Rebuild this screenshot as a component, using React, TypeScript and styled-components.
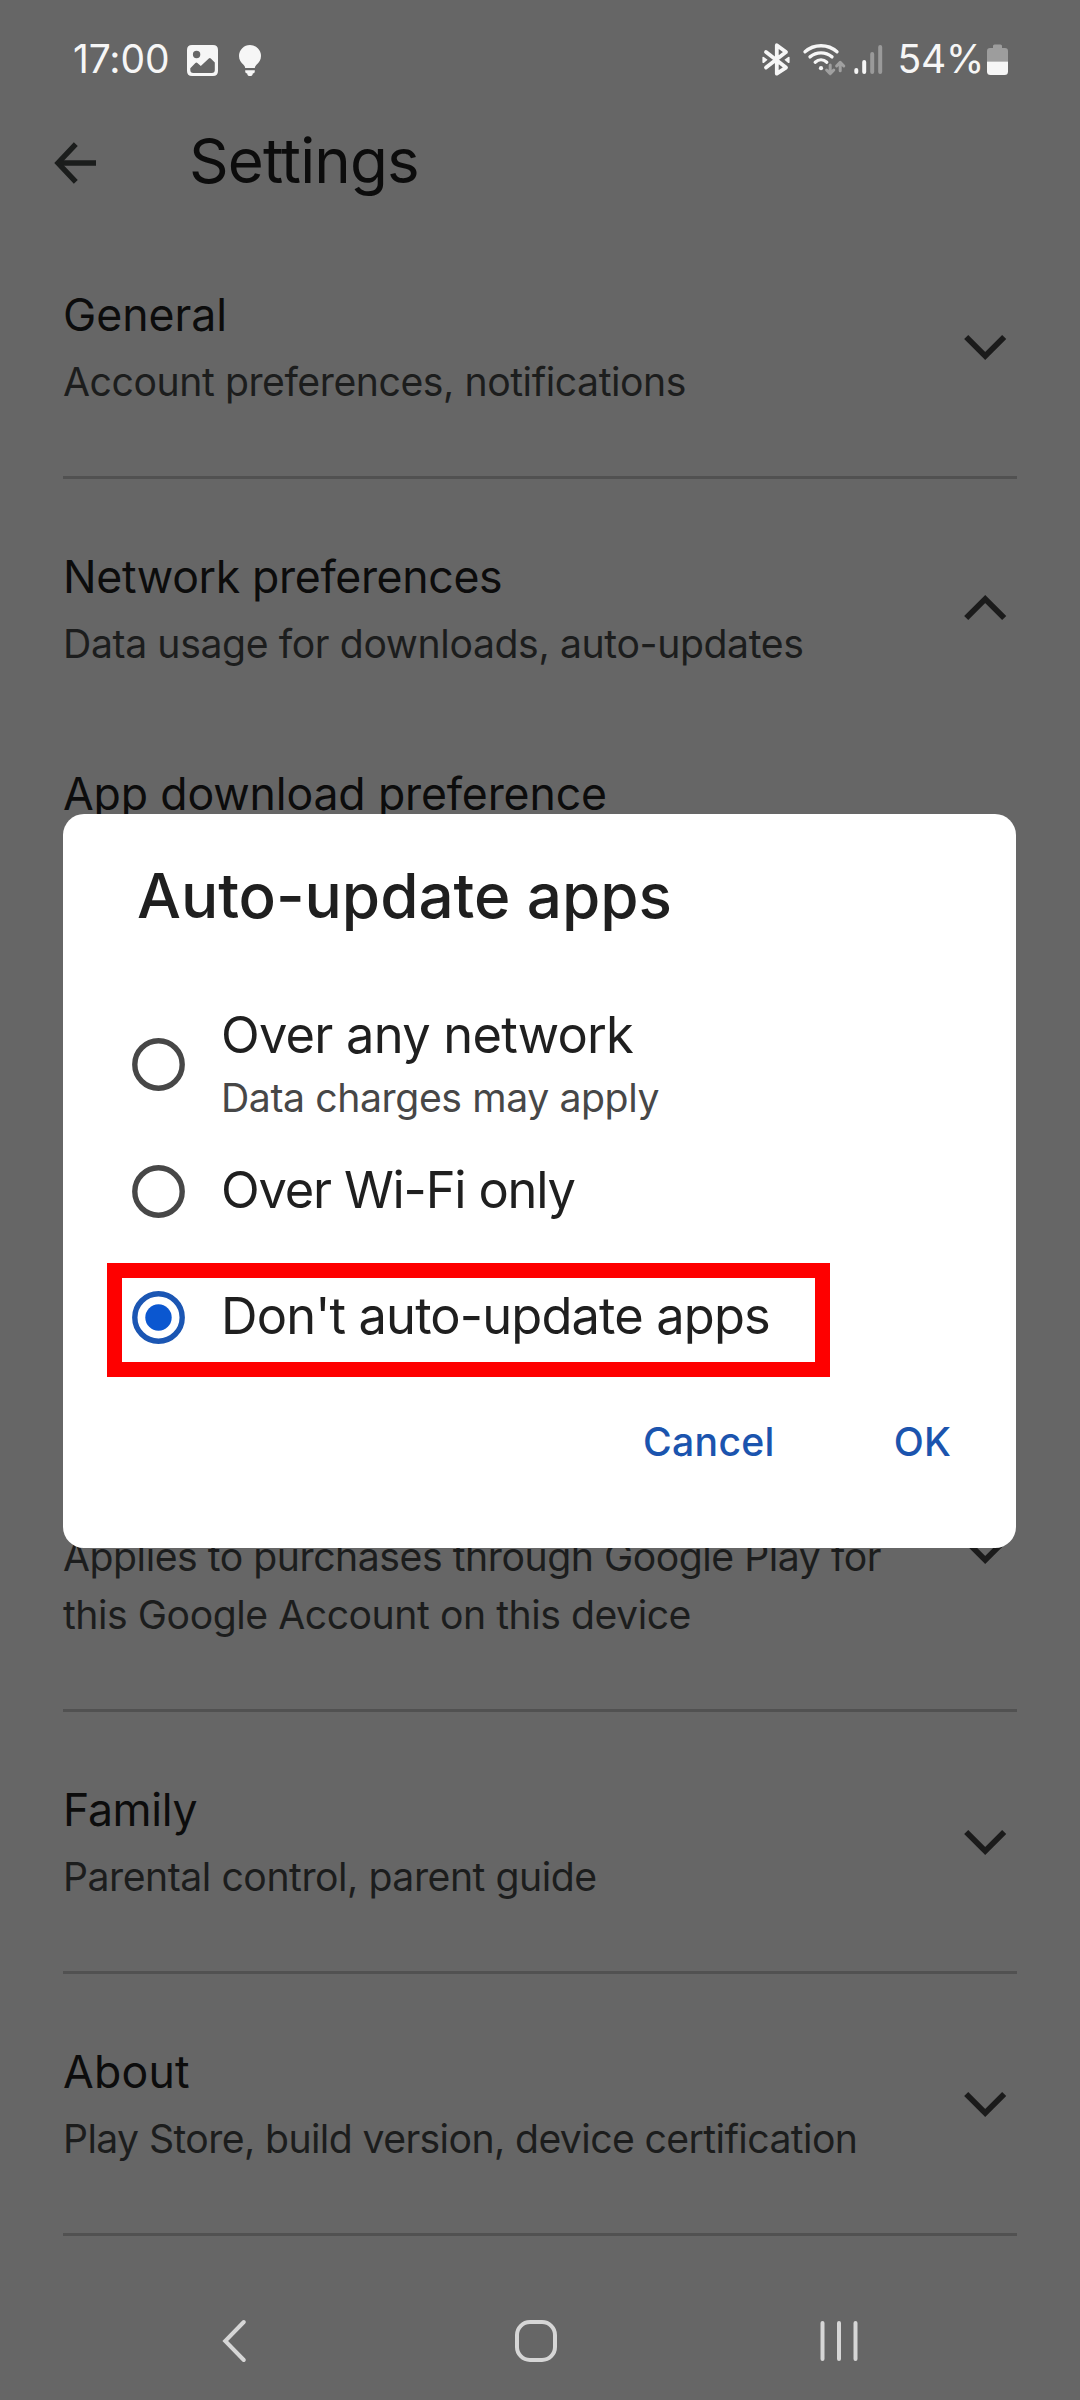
import React, { useState } from "react";
import styled, { createGlobalStyle } from "styled-components";

const Global = createGlobalStyle`
  body {
    margin: 0;
    background: #666666;
    font-family: Inter, "Liberation Sans", sans-serif;
  }
`;

const Screen = styled.div`
  position: relative;
  display: flex;
  flex-direction: column;
  width: 1080px;
  height: 2400px;
  overflow: hidden;
  background: #666666;
`;

const StatusBar = styled.header`
  display: flex;
  align-items: center;
  justify-content: space-between;
  height: 46px;
  padding: 36px 72px 0 73px;
  color: #f6f6f6;
`;

const StatusGroup = styled.div`
  display: flex;
  align-items: center;
`;

const StatusText = styled.span<{ $spacing: number; $before?: number }>`
  margin-left: ${(p) => p.$before ?? 0}px;
  font-size: 39px;
  line-height: 46px;
  letter-spacing: ${(p) => p.$spacing}px;
  white-space: nowrap;
`;

const StatusIcon = styled.svg<{ $before: number }>`
  display: block;
  flex: none;
  margin-top: 2px;
  margin-left: ${(p) => p.$before}px;
  overflow: visible;
`;

const AppBar = styled.div`
  display: flex;
  align-items: center;
  gap: 93px;
  height: 72px;
  margin-top: 43px;
  padding-left: 54px;
`;

const BackButton = styled.button`
  display: block;
  padding: 3px 0 0;
  border: 0;
  background: none;
  line-height: 0;
`;

const PageTitle = styled.h1`
  margin: 0;
  color: #0c0c0c;
  font-size: 61.8px;
  font-weight: 400;
  line-height: 72px;
  letter-spacing: -0.85px;
`;

const List = styled.main`
  display: flex;
  flex-direction: column;
  margin: 20px 63px 0;
`;

const SectionBox = styled.section<{ $divided: boolean }>`
  display: flex;
  align-items: center;
  justify-content: space-between;
  padding: 72px 11px ${(p) => (p.$divided ? 65 : 0)}px 0;
  border-bottom: ${(p) => (p.$divided ? "3px solid #515151" : "0")};
`;

const SectionText = styled.div`
  display: flex;
  flex-direction: column;
  gap: 12px;
  width: 850px;
`;

const RowTitle = styled.h2<{ $spacing: number }>`
  height: 52px;
  margin: 0;
  color: #0c0c0c;
  font-size: 44.6px;
  font-weight: 400;
  line-height: 52px;
  letter-spacing: ${(p) => p.$spacing}px;
  white-space: nowrap;
`;

const RowSummary = styled.p<{ $spacing: number }>`
  margin: 0;
  color: #1c1d1d;
  font-size: 39.2px;
  line-height: 58px;
  letter-spacing: ${(p) => p.$spacing}px;
`;

const SubRow = styled.div`
  height: 52px;
  padding: 95px 0 572px;
`;

const ChevronSvg = styled.svg`
  display: block;
  flex: none;
  overflow: visible;
`;

const NavBar = styled.nav`
  display: flex;
  align-items: flex-start;
  justify-content: space-between;
  width: 637px;
  padding: 84px 0 0 222px;
`;

const NavIcon = styled.svg`
  display: block;
  overflow: visible;
  fill: none;
  stroke: #d6d6d6;
  stroke-width: 4;
`;

const Dialog = styled.div`
  position: absolute;
  top: 814px;
  left: 63px;
  display: flex;
  flex-direction: column;
  box-sizing: border-box;
  width: 953px;
  height: 734px;
  padding: 45px 65px 0 69px;
  border-radius: 21px;
  background: #ffffff;
`;

const DialogTitle = styled.h2`
  margin: 0 0 67px 5px;
  color: #1f1f1f;
  font-size: 62px;
  font-weight: 500;
  line-height: 74px;
  letter-spacing: -0.05px;
  white-space: nowrap;
`;

const Option = styled.label<{ $height: number }>`
  display: flex;
  align-items: center;
  gap: 36px;
  height: ${(p) => p.$height}px;
`;

const OptionText = styled.div`
  display: flex;
  flex-direction: column;
  gap: 9px;
  padding-bottom: 3px;
`;

const OptionLabel = styled.span<{ $spacing: number }>`
  color: #1f1f1f;
  font-size: 50.6px;
  line-height: 60px;
  letter-spacing: ${(p) => p.$spacing}px;
  white-space: nowrap;
`;

const OptionHint = styled.span`
  color: #474747;
  font-size: 39.2px;
  line-height: 48px;
  letter-spacing: -0.41px;
  white-space: nowrap;
`;

const RadioSvg = styled.svg`
  display: block;
  flex: none;
`;

const Highlight = styled.div`
  position: absolute;
  top: 449px;
  left: 44px;
  box-sizing: border-box;
  width: 723px;
  height: 114px;
  border: 15px solid #fe0000;
  pointer-events: none;
`;

const Actions = styled.div`
  display: flex;
  justify-content: flex-end;
  gap: 119px;
  margin-top: 37px;
`;

const ActionButton = styled.button<{ $spacing: number }>`
  padding: 0;
  border: 0;
  background: none;
  color: #1b54ae;
  font-family: inherit;
  font-size: 39.2px;
  font-weight: 500;
  line-height: 48px;
  letter-spacing: ${(p) => p.$spacing}px;
`;

function Chevron({ up }: { up?: boolean }) {
  return (
    <ChevronSvg width="42" height="31" viewBox="0 0 42 31">
      <path
        d={up ? "M2.2 21L21.2 2L40.2 21" : "M2.2 2L21.2 21L40.2 2"}
        fill="none"
        stroke="#1b1b1b"
        strokeWidth="5.8"
      />
    </ChevronSvg>
  );
}

function Radio({ on }: { on: boolean }) {
  return (
    <RadioSvg width="53" height="53" viewBox="0 0 53 53">
      <circle cx="26.5" cy="26.5" r="23.7" fill="none" stroke={on ? "#1b56b3" : "#474747"} strokeWidth="5.4" />
      {on && <circle cx="26.5" cy="26.5" r="13.2" fill="#0b57d0" />}
    </RadioSvg>
  );
}

interface SectionProps {
  title?: string;
  titleSpacing?: number;
  summary: string;
  spacing: number;
  expanded?: boolean;
}

function Section({ title, titleSpacing = 0, summary, spacing, expanded }: SectionProps) {
  return (
    <SectionBox $divided={!expanded}>
      <SectionText>
        <RowTitle $spacing={titleSpacing}>{title}</RowTitle>
        <RowSummary $spacing={spacing}>{summary}</RowSummary>
      </SectionText>
      <Chevron up={expanded} />
    </SectionBox>
  );
}

const options = [
  { label: "Over any network", hint: "Data charges may apply", spacing: -0.76, height: 129 },
  { label: "Over Wi-Fi only", spacing: -1.2, height: 125 },
  { label: "Don't auto-update apps", spacing: -0.86, height: 127 },
];

export default function App() {
  const [selected, setSelected] = useState(2);

  return (
    <Screen>
      <Global />
      <StatusBar>
        <StatusGroup>
          <StatusText $spacing={-0.13}>17:00</StatusText>
          <StatusIcon $before={18} width="31" height="32" viewBox="0 -1 31 32">
            <path
              fill="currentColor"
              fillRule="evenodd"
              d="M5 0H26Q31 0 31 5V26Q31 31 26 31H5Q0 31 0 26V5Q0 0 5 0ZM9.6 5.8A3.7 3.7 0 1 0 9.6 13.2A3.7 3.7 0 1 0 9.6 5.8ZM3.3 23.2L8.4 17.9Q9.4 17 10.4 17.9L13.8 21L21.8 13.4Q22.8 12.5 23.8 13.4L27.8 17.4V25Q27.8 28 24.8 28H6.3Q3.3 28 3.3 25Z"
            />
          </StatusIcon>
          <StatusIcon $before={20.5} width="22" height="32" viewBox="0 -1 22 32">
            <path
              fill="currentColor"
              d="M11 0A11 11 0 0 1 22 11C22 15 20 17.5 17.5 19.7Q16 21 15.8 23H6.2Q6 21 4.5 19.7C2 17.5 0 15 0 11A11 11 0 0 1 11 0ZM6.2 25.3H15.8V26.5Q15.8 28.4 13.8 28.4Q13.6 31 11 31Q8.4 31 8.2 28.4Q6.2 28.4 6.2 26.5Z"
            />
          </StatusIcon>
        </StatusGroup>
        <StatusGroup>
          <StatusIcon $before={0} width="28" height="32" viewBox="0 0 28 32">
            <path
              d="M4 8L24 23.6L14.8 29.6V1.2L24 8L4 23.6"
              fill="none"
              stroke="currentColor"
              strokeWidth="3.8"
              strokeLinejoin="round"
              strokeLinecap="round"
            />
            <path
              d="M0.4 13.2Q0.6 12.3 1.8 12.9L5.6 15.8L1.8 18.9Q0.6 19.4 0.4 18.6ZM27.6 13.2Q27.4 12.3 26.2 12.9L22.4 15.8L26.2 18.9Q27.4 19.4 27.6 18.6Z"
              fill="currentColor"
            />
          </StatusIcon>
          <StatusIcon $before={13.5} width="42" height="32" viewBox="0 0 42 32">
            <g fill="none" stroke="currentColor" strokeWidth="3.3" strokeLinecap="round">
              <path d="M2 7.8C11 -0.3 25 -0.3 34 7.8" />
              <path d="M7 12.9C13.5 7.6 22.5 7.6 29 12.9" />
              <path d="M12.2 18.2C15.6 15.2 20.4 15.2 23.8 18.2" />
            </g>
            <circle cx="18" cy="24.2" r="2.1" fill="currentColor" />
            <g fill="none" stroke="#a0a0a0" strokeWidth="3" strokeLinecap="round" strokeLinejoin="round">
              <path d="M27.2 21V29.4M23.6 26L27.2 29.6L30.8 26" />
              <path d="M37.2 26.8V18.4M33.6 22L37.2 18.4L40.8 22" />
            </g>
          </StatusIcon>
          <StatusIcon $before={9} width="28" height="32" viewBox="0 0 28 32">
            <g stroke="currentColor" strokeWidth="4" strokeLinecap="round">
              <path d="M2.3 26V28" />
              <path d="M10.2 18V28" />
            </g>
            <g stroke="#9a9a9a" strokeWidth="4" strokeLinecap="round">
              <path d="M18.2 10V28" />
              <path d="M26.2 3V28" />
            </g>
          </StatusIcon>
          <StatusText $spacing={-0.22} $before={15}>54%</StatusText>
          <StatusIcon $before={3} width="21" height="32" viewBox="0 0 21 32">
            <path
              d="M6 2Q6 0.5 7.5 0.5H13.5Q15 0.5 15 2V4H18Q21 4 21 7V17.5H0V7Q0 4 3 4H6Z"
              fill="#9d9d9d"
            />
            <path d="M0 17.5H21V27.5Q21 31 17.5 31H3.5Q0 31 0 27.5Z" fill="#f6f6f6" />
          </StatusIcon>
        </StatusGroup>
      </StatusBar>

      <AppBar>
        <BackButton aria-label="Back">
          <svg width="42" height="42" viewBox="0 0 42 42" fill="none" stroke="#1b1d1c" strokeWidth="5.4">
            <path d="M21.8 2.2L4 21L21.8 39.8" />
            <path d="M5 21H42" />
          </svg>
        </BackButton>
        <PageTitle>Settings</PageTitle>
      </AppBar>

      <List>
        <Section title="General" titleSpacing={-0.05} summary="Account preferences, notifications" spacing={-0.45} />
        <Section
          title="Network preferences"
          titleSpacing={-0.34}
          summary="Data usage for downloads, auto-updates"
          spacing={-0.39}
          expanded
        />
        <SubRow>
          <RowTitle $spacing={-0.15}>App download preference</RowTitle>
        </SubRow>
        <Section
          summary="Applies to purchases through Google Play for this Google Account on this device"
          spacing={-0.47}
        />
        <Section title="Family" titleSpacing={-0.35} summary="Parental control, parent guide" spacing={-0.47} />
        <Section
          title="About"
          titleSpacing={0.2}
          summary="Play Store, build version, device certification"
          spacing={-0.61}
        />
      </List>

      <NavBar>
        <NavIcon width="30" height="42" viewBox="0 0 30 42">
          <path d="M21.8 2L3.2 21L21.8 40" strokeLinecap="round" />
        </NavIcon>
        <NavIcon width="42" height="42" viewBox="0 0 42 42">
          <rect x="2" y="2" width="38" height="38" rx="13" />
        </NavIcon>
        <NavIcon width="39" height="42" viewBox="0 0 39 42">
          <path d="M2.5 3V39M19 3V39M35.5 3V39" strokeLinecap="round" />
        </NavIcon>
      </NavBar>

      <Dialog role="dialog">
        <DialogTitle>Auto-update apps</DialogTitle>
        {options.map((o, i) => (
          <Option key={o.label} $height={o.height} onClick={() => setSelected(i)}>
            <Radio on={selected === i} />
            <OptionText>
              <OptionLabel $spacing={o.spacing}>{o.label}</OptionLabel>
              {o.hint && <OptionHint>{o.hint}</OptionHint>}
            </OptionText>
          </Option>
        ))}
        <Actions>
          <ActionButton $spacing={0.3}>Cancel</ActionButton>
          <ActionButton $spacing={0.1}>OK</ActionButton>
        </Actions>
        <Highlight />
      </Dialog>
    </Screen>
  );
}
